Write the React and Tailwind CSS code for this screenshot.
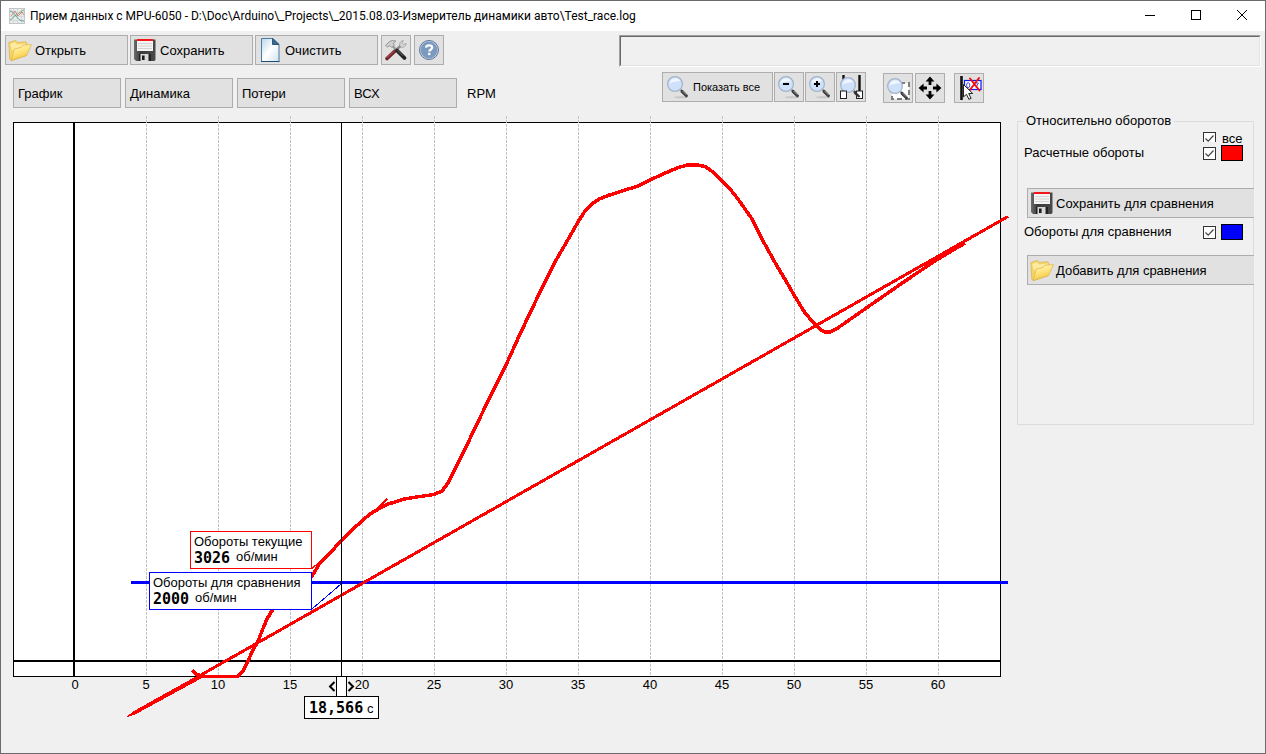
const GRID = [5, 10, 15, 20, 25, 30, 35, 40, 45, 50, 55, 60];
const xOf = (t) => 74 + (t / 5) * 72;

const RPM_CURVE =
  '192,670.5 197,674.5 203,676.5 238,676.5 243,671 248,661 252,652 258,641 262,631 267,619 273,609 285,594 300,583 312,576 320,563 328,555 342,540 352,530 362,521 370,514 380,508 388,504 395,502 404,499 420,496.5 434,494.5 442,491 448,483 455,469 465,449 475,428 490,397 506,365 520,334 530,313 542,288 555,262 566,243 578,222 585,211 592,204 599,199 608,195.5 622,191 638,186 650,180 663,174 677,168 687,165 698,165 705,166.5 713,172 722,181 730,189 738,199 752,219 763,241 777,266 786,281 794,295 805,313 816,325.5 821,330 825,332 830,332 837,328.5 847,321.5 867,307.5 885,295 903,282.5 920,271 938,259 965,243';

function AppIcon() {
  return (
    <svg width="16" height="16" viewBox="0 0 16 16" aria-hidden="true">
      <rect x="0.5" y="0.5" width="15" height="15" fill="#e9ebeb" stroke="#c3c5c6" />
      <path d="M4.5 1v14M8.5 1v14M12.5 1v14M1 4.5h14M1 8.5h14M1 12.5h14" stroke="#d6dadb" />
      <path d="M1 3c3 0 4 3 6 5s3 5 8 5" fill="none" stroke="#5f9c9e" />
      <path d="M1 12c3-1 4-5 6-5s3-3 8-5" fill="none" stroke="#63a672" />
      <path d="M2 8l4-5 3 5 4-4 2 3" fill="none" stroke="#d88383" />
    </svg>
  );
}

function FolderIcon() {
  return (
    <svg width="24" height="24" viewBox="0 0 24 24" aria-hidden="true">
      <defs>
        <linearGradient id="folderFront" x1="0" y1="0" x2="0.4" y2="1">
          <stop offset="0" stopColor="#fff6c4" />
          <stop offset="0.5" stopColor="#ffe681" />
          <stop offset="1" stopColor="#f5c53c" />
        </linearGradient>
      </defs>
      <path d="M0.8 4.6 7.6 2.4l2 2L18 3.8l.8 2.4-1 11.6L3.6 22.6 1.8 21.4Z" fill="#f4d466" stroke="#dcb04a" strokeWidth="0.7" strokeLinejoin="round" />
      <path d="M2 6 7 4.2l2 2.2 8.4-.8.6 4L4 12.4Z" fill="#fcebA0" />
      <path d="M6.2 11 13 9.400l1.600-2.200 8.800-.600L18.600 17.400 3.200 22.600Z" fill="url(#folderFront)" stroke="#dfb347" strokeWidth="0.7" strokeLinejoin="round" />
    </svg>
  );
}

function FloppyIcon() {
  return (
    <svg width="24" height="24" viewBox="0 0 24 24" aria-hidden="true">
      <defs>
        <linearGradient id="floppyBody" x1="0" y1="0" x2="1" y2="0">
          <stop offset="0" stopColor="#6d6d6d" />
          <stop offset="0.3" stopColor="#3a3a3a" />
          <stop offset="1" stopColor="#4a4a4a" />
        </linearGradient>
      </defs>
      <path d="M1 1.5h21.5v20l-1 1.500H3L1 21Z" fill="url(#floppyBody)" />
      <rect x="4" y="1" width="16" height="12" fill="#f4f4f4" />
      <rect x="4" y="1" width="16" height="2" fill="#f01818" />
      <path d="M5 5.5h14M5 8h14M5 10.5h14" stroke="#d3d3d3" />
      <path d="M6 16h12v7H6Z" fill="#d9d9d9" />
      <path d="M6 16h1.500v7H6ZM15.500 16h2.500v7h-2.500Z" fill="#222" />
      <path d="M9 17.500h2.600v4.500H9Z" fill="#1c1c1c" />
    </svg>
  );
}

function PageIcon() {
  return (
    <svg width="24" height="26" viewBox="0 0 24 26" aria-hidden="true">
      <defs>
        <linearGradient id="pageFill" x1="0" y1="0" x2="1" y2="1">
          <stop offset="0" stopColor="#b9d6ec" />
          <stop offset="0.5" stopColor="#ffffff" />
          <stop offset="1" stopColor="#cfe3f2" />
        </linearGradient>
      </defs>
      <path d="M3.500 1.500h11.500l6 6v17H3.500Z" fill="url(#pageFill)" stroke="#4c7aa1" />
      <path d="M14.500 1.500v6H21Z" fill="#3d6a90" stroke="#2b577d" strokeLinejoin="round" />
      <path d="M3 24.500h18.500" stroke="#1c4d77" />
    </svg>
  );
}

function ToolsIcon() {
  return (
    <svg width="24" height="24" viewBox="0 0 24 24" aria-hidden="true">
      <path d="M3 20.500 11.500 12.500" stroke="#6b2226" strokeWidth="3.600" strokeLinecap="round" />
      <path d="M3 19.800 10.500 12.600" stroke="#a8484d" strokeWidth="1.200" />
      <path d="M12 12 17 7.500" stroke="#8b8b8b" strokeWidth="2.400" />
      <path d="M16 8c-1-2.600.4-5 3.200-5.400l-1.400 2.600 1.600 1.400 2.600-1.200c.2 2.800-2.600 4.600-5 3.600Z" fill="#dadada" stroke="#999" strokeWidth="0.800" />
      <path d="M8.500 8 13 12.500" stroke="#9a9a9a" strokeWidth="2.200" />
      <path d="M13 12.500 20.500 20" stroke="#242424" strokeWidth="3.800" strokeLinecap="round" />
      <path d="M13.500 12.200 19 17.700" stroke="#6c6c6c" strokeWidth="1" />
      <path d="M1.500 7.500 5 4c2-1.600 4.500-2 7-.8L9.400 5.200l1 2.200-2.800 2-1.800-1.800-2.200 1.400Z" fill="#cfcfcf" stroke="#888" strokeWidth="0.800" />
    </svg>
  );
}

function HelpIcon() {
  return (
    <svg width="22" height="22" viewBox="0 0 22 22" aria-hidden="true">
      <circle cx="11" cy="11" r="9.500" fill="#c7d6e6" stroke="#5b7699" />
      <circle cx="11" cy="11" r="8" fill="#7c9ac0" stroke="#6d8db5" strokeWidth="0.600" />
      <path d="M8 8.600C8.200 7 9.400 6.300 11.100 6.300c1.900 0 3.100.9 3.100 2.300 0 2.100-2.900 2.100-2.900 3.900" fill="none" stroke="#fff" strokeWidth="2.200" />
      <rect x="10.100" y="13.800" width="2.300" height="2.300" fill="#fff" />
    </svg>
  );
}

function Lens({ children, shadow = true }) {
  return (
    <>
      {shadow && <ellipse cx="15" cy="22.300" rx="7" ry="1" fill="#c6c6c6" />}
      <path d="m14.500 14.500 2 2" stroke="#9c9c9c" strokeWidth="2" />
      <path d="M16 16.400 20.400 20.800" stroke="#3c3c3c" strokeWidth="3" strokeLinecap="round" />
      <path d="m16.600 16 4 4" stroke="#a8a8a8" strokeWidth="0.900" />
      <circle cx="9" cy="9" r="7.400" fill="#cfe1fa" stroke="#a3b3c9" strokeWidth="1.200" />
      <path d="M3.400 8.600C4 5.400 6.400 3.200 9.400 3.200c2.400 0 4.200 1.400 5 3.200-3.600-.4-7.400.6-11 2.200Z" fill="#f1f7ff" />
      {children}
    </>
  );
}

function ZoomAllIcon() {
  return (
    <svg width="24" height="24" viewBox="0 0 24 24" aria-hidden="true">
      <Lens />
    </svg>
  );
}

function ZoomOutIcon() {
  return (
    <svg width="24" height="24" viewBox="0 0 24 24" aria-hidden="true">
      <Lens>
        <path d="M6 9h6" stroke="#000" strokeWidth="2" />
      </Lens>
    </svg>
  );
}

function ZoomInIcon() {
  return (
    <svg width="24" height="24" viewBox="0 0 24 24" aria-hidden="true">
      <Lens>
        <path d="M6 9h6M9 6v6" stroke="#000" strokeWidth="2" />
      </Lens>
    </svg>
  );
}

function ZoomCursorsIcon() {
  return (
    <svg width="26" height="26" viewBox="0 0 26 26" aria-hidden="true">
      <path d="M5.500 1v17M21.500 1v17" stroke="#111" strokeWidth="2.400" />
      <g transform="translate(1 2)">
        <Lens shadow={false} />
      </g>
      <rect x="2.500" y="17" width="6" height="7.500" fill="#fff" stroke="#222" />
      <rect x="18.500" y="17" width="6" height="7.500" fill="#fff" stroke="#222" />
      <path d="m17 18.500 4.500 4.500" stroke="#333" strokeWidth="2.400" />
    </svg>
  );
}

function ZoomAreaIcon() {
  return (
    <svg width="26" height="26" viewBox="0 0 26 26" className="shrink-0" aria-hidden="true">
      <rect x="7" y="8" width="17" height="16" fill="#fff" stroke="#7d7d7d" strokeWidth="2" strokeDasharray="5 3" />
      <g transform="translate(1 2)">
        <Lens shadow={false} />
      </g>
    </svg>
  );
}

function MoveIcon() {
  return (
    <svg width="24" height="24" viewBox="0 0 24 24" aria-hidden="true">
      <path d="M12 0.600 16.400 5.600H13.400V9h-2.800V5.600H7.600ZM12 23.400 7.600 18.400h3v-3.400h2.800v3.400h3ZM.6 12 5.600 7.600v3H9v2.800H5.600v3ZM23.400 12 18.400 16.400v-3H15v-2.800h3.400v-3Z" fill="#000" />
    </svg>
  );
}

function HideLabelsIcon() {
  return (
    <svg width="26" height="26" viewBox="0 0 26 26" className="shrink-0" aria-hidden="true">
      <path d="M5.500 1v24" stroke="#111" strokeWidth="2.600" />
      <rect x="8.500" y="5.500" width="16.500" height="9" fill="#fff" stroke="#1414f0" strokeWidth="1.200" />
      <ellipse cx="12.200" cy="10.200" rx="1.600" ry="2.600" fill="none" stroke="#4a4ae8" />
      <path d="M20 8h2.400l-2.400 4.500" fill="none" stroke="#4a4ae8" />
      <path d="M13.500 15.500 23 3M14 3.500 23.500 15.500" stroke="#f01010" strokeWidth="2" strokeLinecap="round" />
      <path d="M7.500 9.500v12.400l3-2.600 2.400 5 2.200-1-2.400-4.800h4Z" fill="#fff" stroke="#222" strokeWidth="1" />
    </svg>
  );
}

const btn = 'flex h-[30px] shrink-0 items-center border border-[#adadad] bg-[#e1e1e1] text-[13px] text-black';

function TextButton({ icon, children }) {
  return (
    <button type="button" className={`${btn} w-[123px] gap-[3px] px-[2px]`}>
      {icon}
      <span className="pt-[2px]">{children}</span>
    </button>
  );
}

function IconButton({ label, children }) {
  return (
    <button type="button" aria-label={label} className={`${btn} w-[30px] justify-center`}>
      {children}
    </button>
  );
}

function Tab({ children }) {
  return (
    <button type="button" className={`${btn} w-[108px] px-1 pt-[2px]`}>
      {children}
    </button>
  );
}

function TitleBar() {
  const cap = 'grid w-[46px] place-items-center';
  return (
    <header className="flex h-[30px] items-stretch bg-white">
      <div className="flex flex-1 items-center gap-[5px] pl-2">
        <AppIcon />
        <h1 className="font-['Roboto',sans-serif] text-[12px] text-black">
          Прием данных с MPU-6050 - D:\Doc\Arduino\_Projects\_2015.08.03-Измеритель динамики авто\Test_race.log
        </h1>
      </div>
      <button type="button" aria-label="Свернуть" className={cap}>
        <svg width="12" height="12" viewBox="0 0 12 12"><path d="M1 5.500h10" stroke="#000" /></svg>
      </button>
      <button type="button" aria-label="Развернуть" className={cap}>
        <svg width="12" height="12" viewBox="0 0 12 12"><rect x="1.500" y="0.500" width="9" height="9" fill="none" stroke="#000" /></svg>
      </button>
      <button type="button" aria-label="Закрыть" className={cap}>
        <svg width="12" height="12" viewBox="0 0 12 12"><path d="m1 0 10 10M11 0 1 10" stroke="#000" /></svg>
      </button>
    </header>
  );
}

function MainToolbar() {
  return (
    <div className="flex pr-1 pl-1 pt-1">
      <div className="flex gap-[2px]">
        <TextButton icon={<FolderIcon />}>Открыть</TextButton>
        <TextButton icon={<FloppyIcon />}>Сохранить</TextButton>
        <TextButton icon={<PageIcon />}>Очистить</TextButton>
      </div>
      <div className="ml-[3px] flex gap-[3px]">
        <IconButton label="Настройки"><ToolsIcon /></IconButton>
        <IconButton label="Справка"><HelpIcon /></IconButton>
      </div>
      <div className="ml-[175px] h-8 flex-1 border border-t-[#a0a0a0] border-r-white border-b-white border-l-[#a0a0a0]">
        <div className="h-full border border-t-[#696969] border-r-[#e3e3e3] border-b-[#e3e3e3] border-l-[#696969]" />
      </div>
    </div>
  );
}

function ChartToolbar() {
  return (
    <div className="flex h-[45px] items-start pr-[26px] pl-3">
      <nav className="flex items-center gap-1 pt-[11px] text-[13px]">
        <Tab>График</Tab>
        <Tab>Динамика</Tab>
        <Tab>Потери</Tab>
        <Tab>ВСХ</Tab>
        <span className="pt-[2px] pl-[6px]">RPM</span>
      </nav>
      <div className="ml-auto flex gap-px pt-[5px]">
        <button type="button" className={`${btn} w-[111px] gap-[3px] px-[3px]`}>
          <ZoomAllIcon />
          <span className="pt-px text-[11px]">Показать все</span>
        </button>
        <IconButton label="Уменьшить"><ZoomOutIcon /></IconButton>
        <IconButton label="Увеличить"><ZoomInIcon /></IconButton>
        <IconButton label="Между курсорами"><ZoomCursorsIcon /></IconButton>
      </div>
      <div className="ml-[17px] flex gap-[2px] pt-[6px]">
        <IconButton label="Выделить область"><ZoomAreaIcon /></IconButton>
        <IconButton label="Переместить"><MoveIcon /></IconButton>
      </div>
      <div className="ml-[9px] flex pt-[6px]">
        <IconButton label="Скрыть метки"><HideLabelsIcon /></IconButton>
      </div>
    </div>
  );
}

function Chart() {
  const num = "font-['DejaVu_Sans_Mono',monospace] text-[15px] font-bold";
  return (
    <svg viewBox="1 112 1009 612" className="block h-auto w-full text-[13px]" role="img" aria-label="RPM">
      <g shapeRendering="crispEdges">
        <rect x="13.5" y="122.5" width="987" height="554" fill="#fff" stroke="#000" />
        {GRID.map((t) => (
          <path key={t} d={`M${xOf(t) + 0.5} 116V676`} stroke="#c3c3c3" strokeDasharray="3 1" />
        ))}
        <path d="M74 122V676M13 661H1001" stroke="#000" strokeWidth="2" />
        <path d="M131 582.5H1008" stroke="#00f" strokeWidth="3" />
        <path d="M1008 216.5 201 675" stroke="red" strokeWidth="3" />
        <path d="M202 673 133 711.5 125 718 135 714.5 202 678Z" fill="red" />
        <polyline points={RPM_CURVE} fill="none" stroke="red" strokeWidth="3.5" strokeLinejoin="round" />
        <path d="M387 499 378 508M312 568.5 322 560" stroke="red" strokeWidth="1.5" />
        <path d="M312 609 341 584" stroke="#00f" />
        <path d="M341.5 122V676" stroke="#000" />
        <rect x="190.5" y="531.5" width="121" height="37" fill="#fff" stroke="red" />
        <rect x="149.5" y="572.5" width="162" height="37" fill="#fff" stroke="#00f" />
        <rect x="336.5" y="676.5" width="10" height="20" fill="#fff" stroke="#000" />
        <rect x="304.5" y="696.5" width="74" height="22" fill="#fff" stroke="#000" />
      </g>
      <path d="m334.500 682-4.500 4.500 4.500 4.500M348.500 682l4.500 4.500-4.500 4.500" fill="none" stroke="#000" strokeWidth="2" />
      <text x="194" y="546">Обороты текущие</text>
      <text x="194" y="563" className={num}>3026</text>
      <text x="236" y="561">об/мин</text>
      <text x="153" y="587">Обороты для сравнения</text>
      <text x="153" y="604" className={num}>2000</text>
      <text x="195" y="602">об/мин</text>
      <text x="309" y="713" className={num}>18,566</text>
      <text x="367" y="713">с</text>
      <g textAnchor="middle">
        <text x="75" y="689">0</text>
        {GRID.map((t) => (
          <text key={t} x={xOf(t)} y="689">{t}</text>
        ))}
      </g>
    </svg>
  );
}

function Check({ id, label, clipped }) {
  return (
    <span className={`grid w-[13px] shrink-0 overflow-hidden ${clipped ? 'h-[10px]' : 'h-[13px]'}`}>
      <input
        id={id}
        type="checkbox"
        defaultChecked
        aria-label={label}
        className="col-start-1 row-start-1 m-0 size-[13px] appearance-none border border-[#333] bg-white"
      />
      <svg width="13" height="13" viewBox="0 0 13 13" className="pointer-events-none col-start-1 row-start-1" aria-hidden="true">
        <path d="m2.500 6.500 2.700 2.700 5.300-5.700" fill="none" stroke="#444" strokeWidth="1.200" />
      </svg>
    </span>
  );
}

function SeriesRow({ id, name, swatch }) {
  return (
    <div className="flex h-4 items-center gap-[5px] pr-[10px] pl-[6px]">
      <label htmlFor={id} className="flex-1">{name}</label>
      <Check id={id} />
      <button type="button" aria-label={`Цвет: ${name}`} className={`h-4 w-[22px] border border-black ${swatch}`} />
    </div>
  );
}

function SidePanel() {
  return (
    <fieldset className="h-[312px] w-[237px] shrink-0 border border-[#dcdcdc] text-[13px]">
      <legend className="ml-[5px] px-[3px] leading-4">Относительно оборотов</legend>
      <div className="flex h-4 items-start justify-end gap-[5px] pt-[3px] pr-[10px]">
        <Check id="all" clipped />
        <label htmlFor="all" className="w-[22px] pl-px leading-[13px]">все</label>
      </div>
      <SeriesRow id="calc" name="Расчетные обороты" swatch="bg-[#f00]" />
      <div className="-mr-px pt-[27px] pb-[6px] pl-[9px]">
        <button type="button" className={`${btn} w-full gap-[2px] border-r-0 px-[2px]`}>
          <FloppyIcon />
          <span className="pt-[2px]">Сохранить для сравнения</span>
        </button>
      </div>
      <SeriesRow id="compare" name="Обороты для сравнения" swatch="bg-[#00f]" />
      <div className="-mr-px pt-[15px] pl-[9px]">
        <button type="button" className={`${btn} w-full gap-[2px] border-r-0 px-[2px]`}>
          <FolderIcon />
          <span className="pt-[2px]">Добавить для сравнения</span>
        </button>
      </div>
    </fieldset>
  );
}

export default function App() {
  return (
    <div className="flex min-h-screen flex-col border border-[#6b6b6e] bg-[#f0f0f0] font-['Liberation_Sans',Arial,sans-serif] text-black">
      <TitleBar />
      <MainToolbar />
      <main className="flex items-start gap-[7px] pr-[11px]">
        <section className="min-w-0 flex-1">
          <ChartToolbar />
          <Chart />
        </section>
        <aside className="pt-[46px]">
          <SidePanel />
        </aside>
      </main>
    </div>
  );
}
